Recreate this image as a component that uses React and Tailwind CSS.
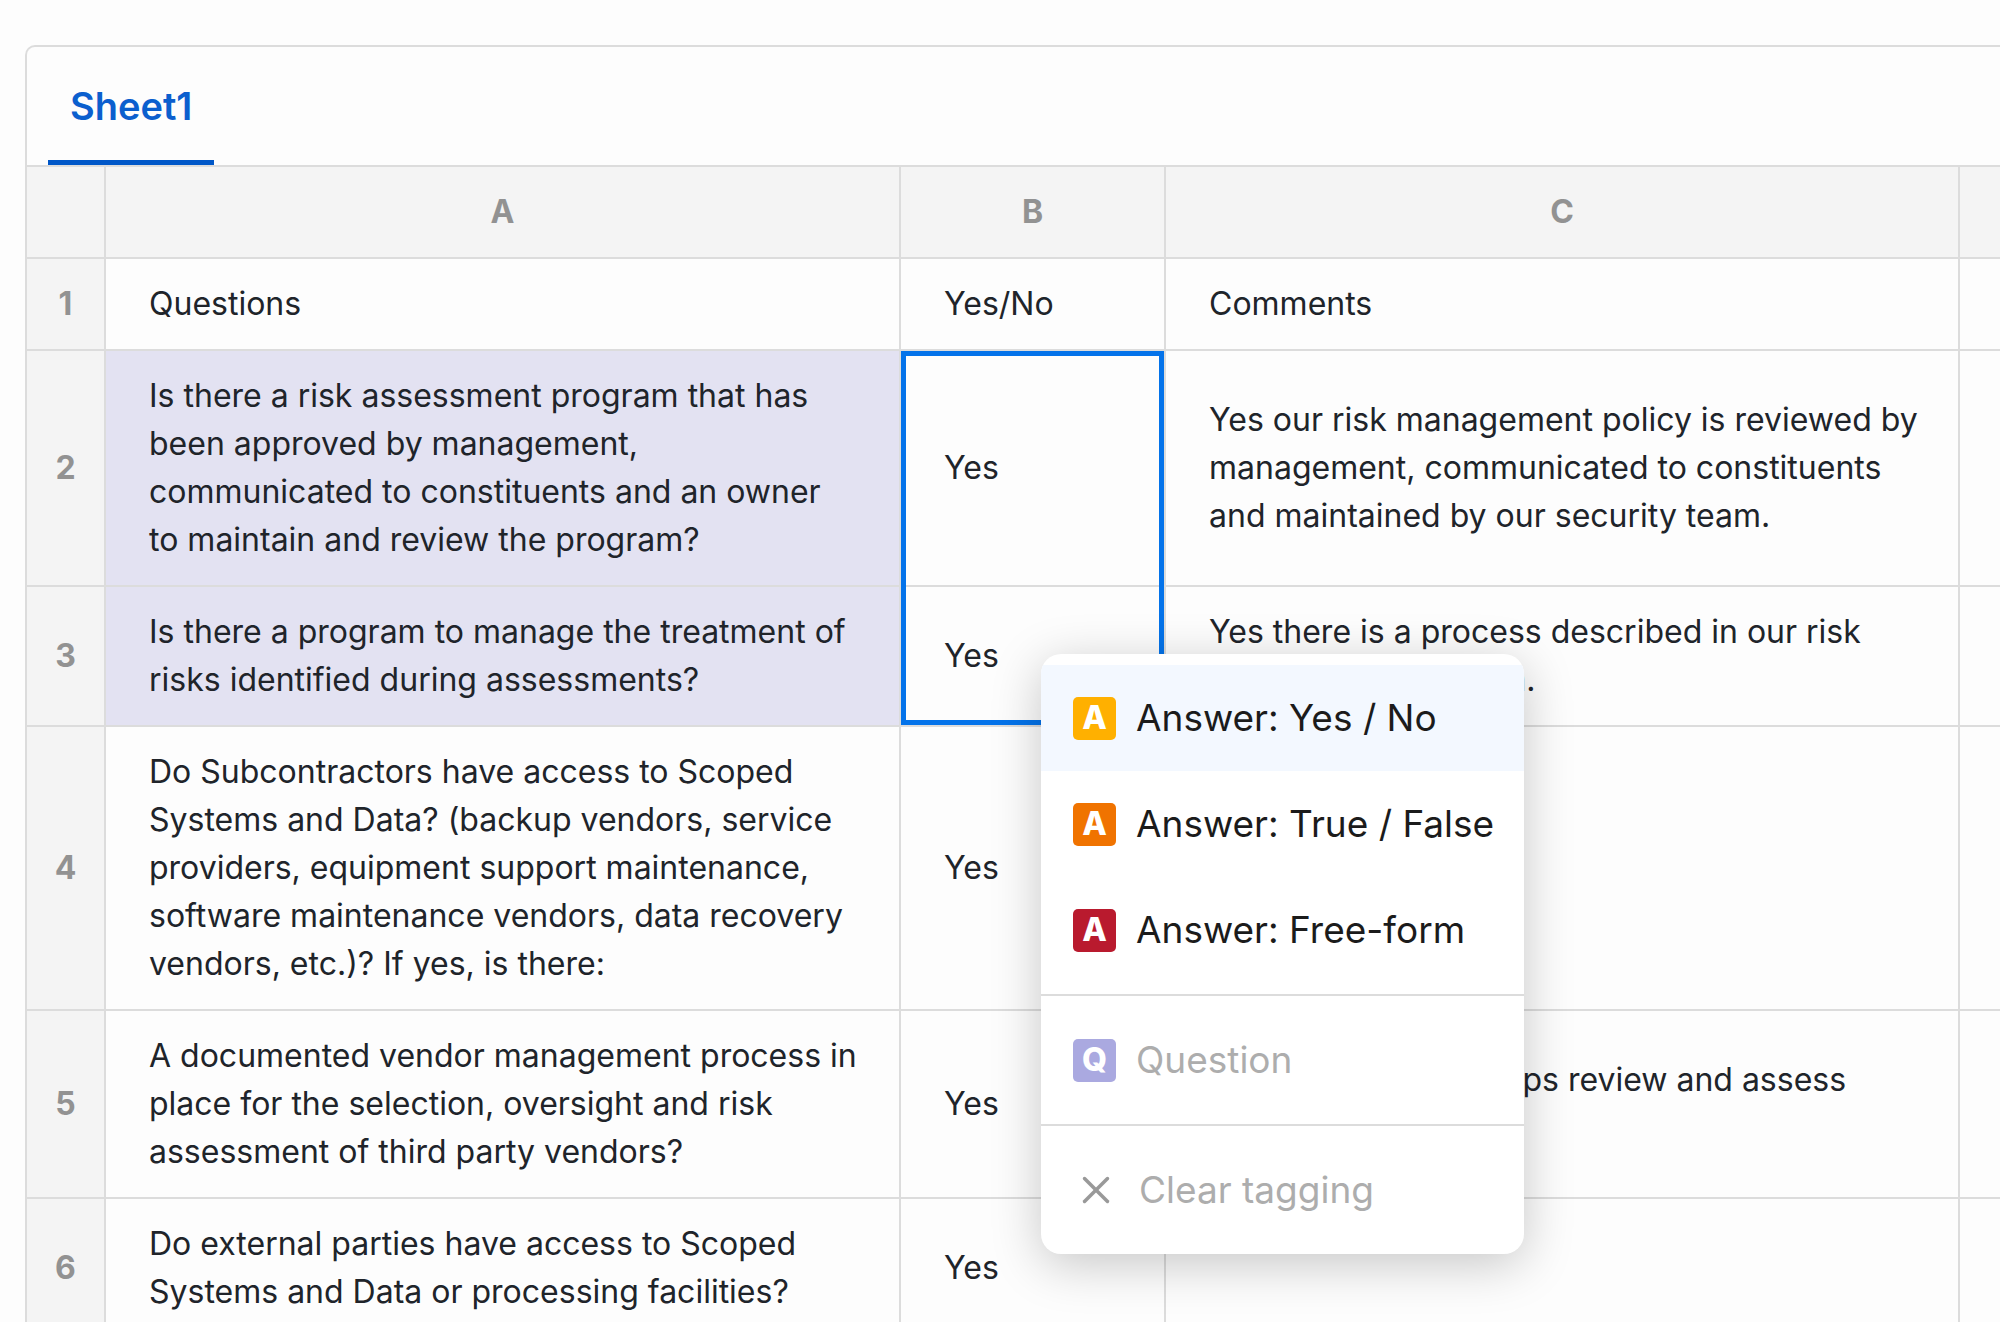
import { X } from "lucide-react";

const COLUMNS = ["A", "B", "C"];

const ROWS = [
  { cells: ["Questions", "Yes/No", "Comments"] },
  {
    tagged: true,
    selected: "top",
    cells: [
      "Is there a risk assessment program that has been approved by management, communicated to constituents and an owner to\u00a0maintain and review the program?",
      "Yes",
      "Yes our risk management policy is reviewed by management, communicated to constituents and maintained by our security team.",
    ],
  },
  {
    tagged: true,
    selected: "bottom",
    cells: [
      "Is there a program to manage the treatment of risks identified during assessments?",
      "Yes",
      "Yes there is a process described in our risk assessment program.",
    ],
  },
  {
    cells: [
      "Do Subcontractors have access to Scoped Systems and Data? (backup vendors, service providers, equipment support maintenance, software maintenance vendors, data recovery vendors, etc.)? If yes, is there:",
      "Yes",
      "",
    ],
  },
  {
    cells: [
      "A documented vendor management process in place for the selection, oversight and risk assessment of third party vendors?",
      "Yes",
      "Yes. Legal and dev ops review and assess subcontractors",
    ],
  },
  {
    cells: [
      "Do external parties have access to Scoped Systems and Data or processing facilities?",
      "Yes",
      "",
    ],
  },
];

const ANSWERS = [
  { label: "Answer: Yes / No", color: "bg-[#ffb000]", active: true },
  { label: "Answer: True / False", color: "bg-[#f07300]" },
  { label: "Answer: Free-form", color: "bg-[#b91a2e]" },
];

const SELECTION = {
  top: "top-0 -bottom-[2px] border-t-[5px]",
  bottom: "top-0 bottom-0 border-b-[5px]",
};

function Tag({ letter, color }) {
  return (
    <span
      className={`flex size-[43px] shrink-0 items-center justify-center rounded-[5px] text-[32px] leading-none font-extrabold text-white ${color}`}
    >
      {letter}
    </span>
  );
}

function MenuItem({ icon, label, active, disabled }) {
  return (
    <button
      role="menuitem"
      disabled={disabled}
      className={`flex h-[106px] w-full items-center gap-5 pl-[32px] text-left whitespace-nowrap ${active ? "bg-[#f3f8ff]" : ""} ${disabled ? "text-[#adadad]" : "text-[#1b1b1b]"}`}
    >
      {icon}
      {label}
    </button>
  );
}

function TagMenu() {
  return (
    <div
      role="menu"
      className="absolute top-[654px] left-[1041px] w-[483px] divide-y-2 divide-[#dcdcdc] overflow-hidden rounded-[20px] bg-white text-[37px] shadow-[0_10px_50px_rgba(0,0,0,0.22)]"
    >
      <div className="py-[11px]">
        {ANSWERS.map((a) => (
          <MenuItem
            key={a.label}
            label={a.label}
            active={a.active}
            icon={<Tag letter="A" color={a.color} />}
          />
        ))}
      </div>
      <div className="py-[11px]">
        <MenuItem disabled label="Question" icon={<Tag letter="Q" color="bg-[#aaa9e0]" />} />
      </div>
      <div className="py-[11px]">
        <MenuItem
          disabled
          label="Clear tagging"
          icon={<X className="size-[46px] shrink-0 text-[#999999]" strokeWidth={1.8} />}
        />
      </div>
    </div>
  );
}

export default function App() {
  return (
    <div className="relative h-screen overflow-hidden bg-[#fdfdfd] pt-[45px] pl-[25px] font-['Inter',sans-serif] text-[#20242a]">
      <div className="overflow-hidden rounded-tl-[10px] border-t-2 border-l-2 border-[#dcdcdc]">
        <div role="tablist" className="flex h-[120px] border-b-2 border-[#dcdcdc] pl-[21px]">
          <button
            role="tab"
            aria-selected="true"
            className="border-b-[5px] border-[#0057c8] px-[22px] pt-[5px] text-[38px] font-semibold text-[#0b5fce]"
          >
            Sheet1
          </button>
        </div>

        <table className="w-full table-fixed border-separate border-spacing-0 text-[32px] leading-[48px]">
          <colgroup>
            <col className="w-[79px]" />
            <col className="w-[795px]" />
            <col className="w-[265px]" />
            <col className="w-[794px]" />
            <col />
          </colgroup>
          <thead>
            <tr className="h-[92px] bg-[#f4f4f4] text-[#929292]">
              <td className="border-r-2 border-b-2 border-[#dcdcdc]" />
              {COLUMNS.map((name) => (
                <th key={name} className="border-r-2 border-b-2 border-[#dcdcdc] font-bold">
                  {name}
                </th>
              ))}
              <td className="border-b-2 border-[#dcdcdc]" />
            </tr>
          </thead>
          <tbody>
            {ROWS.map((row, r) => (
              <tr key={r}>
                <th className="border-r-2 border-b-2 border-[#dcdcdc] bg-[#f4f4f4] font-bold text-[#929292]">
                  {r + 1}
                </th>
                {row.cells.map((text, c) => (
                  <td
                    key={c}
                    className={`relative border-r-2 border-b-2 border-[#dcdcdc] py-[21px] pr-[30px] pl-[43px] ${row.tagged && c === 0 ? "bg-[#e3e2f2]" : ""}`}
                  >
                    {text}
                    {row.selected && c === 1 && (
                      <span
                        className={`absolute inset-x-0 border-x-[5px] border-[#0473ea] ${SELECTION[row.selected]}`}
                      />
                    )}
                  </td>
                ))}
                <td className="border-b-2 border-[#dcdcdc]" />
              </tr>
            ))}
          </tbody>
        </table>
      </div>
      <TagMenu />
    </div>
  );
}
